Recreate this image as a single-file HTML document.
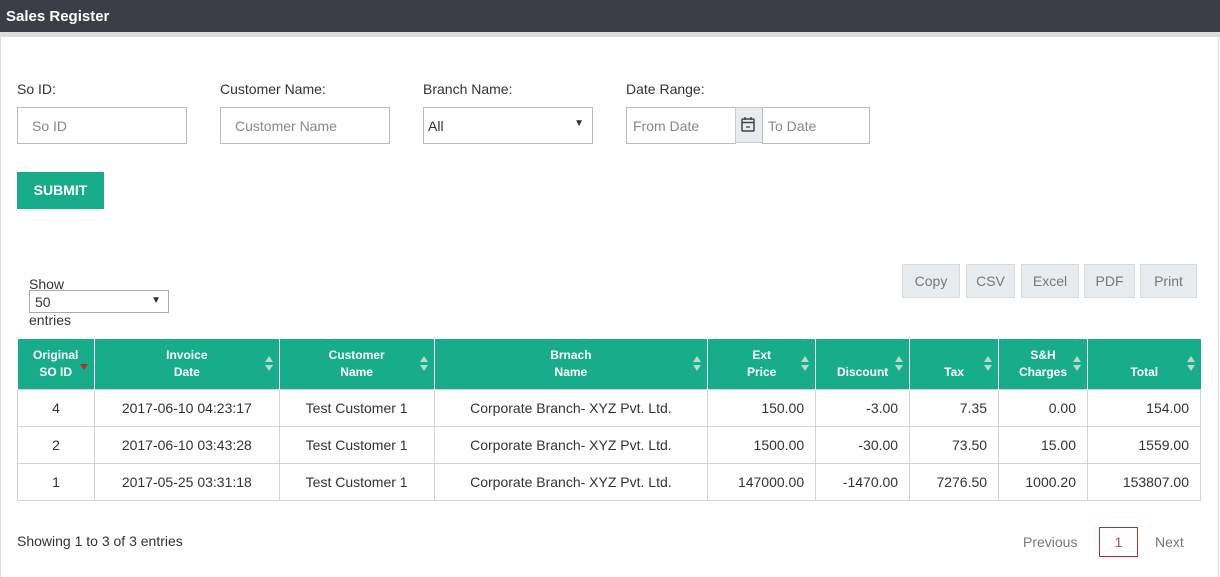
<!DOCTYPE html>
<html><head><meta charset="utf-8"><style>
*{box-sizing:border-box;margin:0;padding:0}
body{width:1220px;height:567px;background:#fff;font-family:"Liberation Sans",sans-serif;color:#333;font-size:14px;position:relative;overflow:hidden}
.a{position:absolute}
.top{left:0;top:0;width:1220px;height:32px;background:#3b3e46;color:#fff;font-weight:bold;font-size:15px;padding:8px 0 0 6px}
.strip{left:0;top:32px;width:1220px;height:5px;background:#dcdcdc}
.panel{left:0;top:37px;width:1219px;height:540px;border-left:1px solid #ddd;border-right:1px solid #ddd}
.lbl{font-size:14px;color:#333}
.inp{height:37px;border:1px solid #bbb;background:#fff;color:#888;font-size:14px;padding:10px 0 0 14px}
.sub{left:17px;top:172px;width:87px;height:37px;background:#18ad8a;color:#fff;font-weight:bold;font-size:14px;text-align:center;padding-top:10px}
.btn{top:264px;height:34px;background:#e8ecee;border:1px solid #d6dadc;color:#777;font-size:14px;text-align:center;padding-top:8px}
table{position:absolute;left:17px;top:339px;width:1184px;border-collapse:collapse}
th{background:#18ad8a;color:#fff;font-size:12px;font-weight:bold;height:50px;border-left:1px solid #fff;position:relative;vertical-align:bottom;padding-bottom:8px;line-height:17px}
th:first-child{border-left:none}
td{border:1px solid #d4d4d4;height:37px;font-size:14px;text-align:center;color:#333}
td.r{text-align:right;padding-right:11px}
.s{position:absolute;right:6px;top:17px;width:0;height:0;border-left:4px solid transparent;border-right:4px solid transparent;border-bottom:6px solid #bcd8cf}
.s2{position:absolute;right:6px;top:26px;width:0;height:0;border-left:4px solid transparent;border-right:4px solid transparent;border-top:6px solid #bcd8cf}
</style></head><body>
<div class="a top">Sales Register</div>
<div class="a strip"></div>
<div class="a panel"></div>

<div class="a lbl" style="left:17px;top:81px">So ID:</div>
<div class="a lbl" style="left:220px;top:81px">Customer Name:</div>
<div class="a lbl" style="left:423px;top:81px">Branch Name:</div>
<div class="a lbl" style="left:626px;top:81px">Date Range:</div>

<div class="a inp" style="left:17px;top:107px;width:170px">So ID</div>
<div class="a inp" style="left:220px;top:107px;width:170px">Customer Name</div>
<div class="a inp" style="left:423px;top:107px;width:170px;color:#333;padding-left:4px">All<span style="position:absolute;right:8px;top:10px;font-size:10px">▼</span></div>
<div class="a inp" style="left:626px;top:107px;width:110px;padding-left:6px">From Date</div>
<div class="a" style="left:735px;top:107px;width:28px;height:36px;background:#e8ecee;border:1px solid #ccc">
<svg width="26" height="34" viewBox="0 0 26 34"><rect x="6" y="11" width="12" height="12" rx="1" fill="none" stroke="#444" stroke-width="1.5"/><line x1="6" y1="14.5" x2="18" y2="14.5" stroke="#444" stroke-width="1.5"/><line x1="9" y1="9" x2="9" y2="12" stroke="#444" stroke-width="1.5"/><line x1="15" y1="9" x2="15" y2="12" stroke="#444" stroke-width="1.5"/><line x1="10" y1="19" x2="14" y2="19" stroke="#444" stroke-width="1.3"/></svg></div>
<div class="a inp" style="left:762px;top:107px;width:108px;padding-left:5px">To Date</div>

<div class="a sub">SUBMIT</div>

<div class="a" style="left:29px;top:275px;line-height:18px">Show</div>
<div class="a" style="left:29px;top:290px;width:140px;height:23px;border:1px solid #aaa;padding:3px 0 0 5px;font-size:14px">50<span style="position:absolute;right:7px;top:4px;font-size:10px">▼</span></div>
<div class="a" style="left:29px;top:311px;line-height:18px">entries</div>

<div class="a btn" style="left:902px;width:58px">Copy</div>
<div class="a btn" style="left:966px;width:49px">CSV</div>
<div class="a btn" style="left:1021px;width:58px">Excel</div>
<div class="a btn" style="left:1084px;width:51px">PDF</div>
<div class="a btn" style="left:1140px;width:57px">Print</div>

<table>
<tr>
<th style="width:77px">Original<br>SO ID<span style="position:absolute;right:6px;top:25px;border-left:4px solid transparent;border-right:4px solid transparent;border-top:6px solid #b0302a"></span></th>
<th style="width:185px">Invoice<br>Date<span class="s"></span><span class="s2"></span></th>
<th style="width:155px">Customer<br>Name<span class="s"></span><span class="s2"></span></th>
<th style="width:274px">Brnach<br>Name<span class="s"></span><span class="s2"></span></th>
<th style="width:108px">Ext<br>Price<span class="s"></span><span class="s2"></span></th>
<th style="width:94px">Discount<span class="s"></span><span class="s2"></span></th>
<th style="width:89px">Tax<span class="s"></span><span class="s2"></span></th>
<th style="width:89px">S&amp;H<br>Charges<span class="s"></span><span class="s2"></span></th>
<th style="width:113px">Total<span class="s"></span><span class="s2"></span></th>
</tr>
<tr><td>4</td><td>2017-06-10 04:23:17</td><td>Test Customer 1</td><td>Corporate Branch- XYZ Pvt. Ltd.</td><td class="r">150.00</td><td class="r">-3.00</td><td class="r">7.35</td><td class="r">0.00</td><td class="r">154.00</td></tr>
<tr><td>2</td><td>2017-06-10 03:43:28</td><td>Test Customer 1</td><td>Corporate Branch- XYZ Pvt. Ltd.</td><td class="r">1500.00</td><td class="r">-30.00</td><td class="r">73.50</td><td class="r">15.00</td><td class="r">1559.00</td></tr>
<tr><td>1</td><td>2017-05-25 03:31:18</td><td>Test Customer 1</td><td>Corporate Branch- XYZ Pvt. Ltd.</td><td class="r">147000.00</td><td class="r">-1470.00</td><td class="r">7276.50</td><td class="r">1000.20</td><td class="r">153807.00</td></tr>
</table>

<div class="a" style="left:17px;top:533px">Showing 1 to 3 of 3 entries</div>
<div class="a" style="left:1023px;top:534px;color:#777">Previous</div>
<div class="a" style="left:1099px;top:527px;width:39px;height:30px;border:1px solid #b0302a;color:#b04a6a;text-align:center;padding-top:6px">1</div>
<div class="a" style="left:1155px;top:534px;color:#777">Next</div>
</body></html>
